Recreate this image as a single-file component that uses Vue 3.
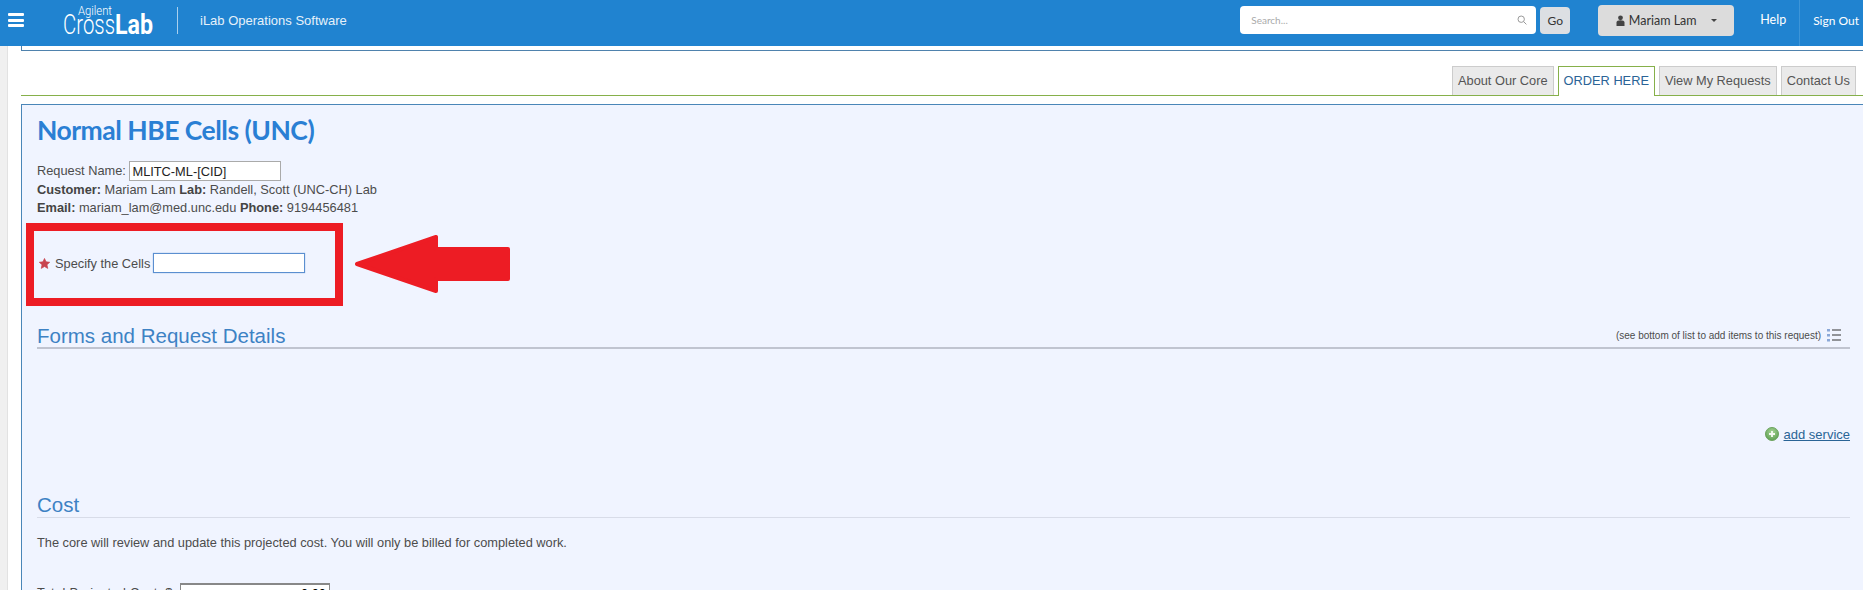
<template>
  <div class="app">
    <header class="topbar">
      <button class="menu-btn" aria-label="Menu">
        <span></span><span></span><span></span>
      </button>
      <svg class="logo" width="96" height="40" viewBox="0 0 96 40">
        <text x="20" y="15" class="logo-small" textLength="34" lengthAdjust="spacingAndGlyphs">Agilent</text>
        <text x="5" y="34" class="logo-light" textLength="52" lengthAdjust="spacingAndGlyphs">Cross</text>
        <text x="57" y="34" class="logo-bold" textLength="38" lengthAdjust="spacingAndGlyphs">Lab</text>
      </svg>
      <div class="brand-divider"></div>
      <div class="brand-name">iLab Operations Software</div>

      <div class="search">
        <span class="search-hint">Search...</span>
        <svg width="10" height="10" viewBox="0 0 10 10" class="search-icon">
          <circle cx="4.2" cy="4.2" r="3.2" fill="none" stroke="#999" stroke-width="1" />
          <path d="M6.6 6.6L9.4 9.4" stroke="#999" stroke-width="1" />
        </svg>
      </div>
      <button class="go-btn">Go</button>
      <button class="user-btn">
        <svg width="9" height="11" viewBox="0 0 9 11">
          <circle cx="4.5" cy="2.8" r="2.4" fill="#444" />
          <path d="M0.5 11V7.5C0.5 6 2 5.3 4.5 5.3S8.5 6 8.5 7.5V11Z" fill="#444" />
        </svg>
        <span>Mariam Lam</span>
        <i class="caret"></i>
      </button>
      <a class="top-link help">Help</a>
      <a class="top-link signout">Sign Out</a>
    </header>

    <div class="page">
      <div class="strip"></div>
      <main class="content">
        <div class="prev-box"></div>

        <nav class="tabs">
          <a v-for="tab in tabs" :key="tab" class="tab" :class="{ active: tab === 'ORDER HERE' }">{{ tab }}</a>
        </nav>

        <section class="panel">
          <h1>Normal HBE Cells (UNC)</h1>

          <div class="info">
            <div class="info-row">Request Name: <input class="name-input" value="MLITC-ML-[CID]" /></div>
            <div><b>Customer:</b> Mariam Lam <b>Lab:</b> Randell, Scott (UNC-CH) Lab</div>
            <div class="info-last"><b>Email:</b> mariam_lam@med.unc.edu <b>Phone:</b> 9194456481</div>
          </div>

          <div class="field">
            <svg width="11" height="11" viewBox="0 0 24 24">
              <path d="M12 1l3.4 7.4 8 .9-6 5.4 1.700 8L12 18.600l-7.100 4.100 1.700-8-6-5.400 8-.9z" fill="#c8434f" stroke="#c8434f" stroke-width="1.500" stroke-linejoin="round" />
            </svg>
            <label>Specify the Cells</label>
            <input class="cells-input" />
          </div>

          <div class="forms-head">
            <h2>Forms and Request Details</h2>
            <div class="forms-hint">
              <span>(see bottom of list to add items to this request)</span>
              <svg width="14" height="13" viewBox="0 0 14 13">
                <rect x="0" y="0" width="3" height="2.500" fill="#8aa8d8" />
                <rect x="0" y="5" width="3" height="2.500" fill="#8aa8d8" />
                <rect x="0" y="10" width="3" height="2.500" fill="#8aa8d8" />
                <path d="M5 1H14M5 6H14M5 11H14" stroke="#333" stroke-width="1" />
              </svg>
            </div>
          </div>

          <div class="add-row">
            <svg width="14" height="14" viewBox="0 0 15 15">
              <defs>
                <radialGradient id="addGreen" cx="50%" cy="35%" r="65%">
                  <stop offset="0%" stop-color="#a6d596" />
                  <stop offset="100%" stop-color="#5f9f52" />
                </radialGradient>
              </defs>
              <circle cx="7.500" cy="7.500" r="7" fill="url(#addGreen)" stroke="#6ba35c" />
              <path d="M7.500 4.300V10.700M4.300 7.500H10.700" stroke="#f4f8f0" stroke-width="2" />
            </svg>
            <a class="add-link">add service</a>
          </div>

          <h2 class="cost-title">Cost</h2>
          <p class="cost-note">The core will review and update this projected cost. You will only be billed for completed work.</p>
          <div class="total-row">
            <span class="total-label">Total Projected Cost: $</span>
            <input class="total-input" value="0.00" />
          </div>
        </section>
      </main>

      <div class="callout"></div>
      <svg class="arrow" width="156" height="60" viewBox="0 0 156 60">
        <path d="M3 30L82 3V15H154V45H82V57Z" fill="#ed1c24" stroke="#ed1c24" stroke-width="4" stroke-linejoin="round" />
      </svg>
    </div>
  </div>
</template>

<script setup>
const tabs = ['About Our Core', 'ORDER HERE', 'View My Requests', 'Contact Us']
</script>

<style>
html, body {
  margin: 0;
  background: #fff;
  overflow: hidden;
}
</style>

<style scoped>
.app {
  height: 590px;
  overflow: hidden;
  font-family: "Liberation Sans", Arial, sans-serif;
  font-size: 12.800px;
  color: #4c4c4c;
}

.topbar {
  height: 46px;
  box-sizing: border-box;
  padding-bottom: 6px;
  background: #2083d0;
  display: flex;
  align-items: center;
  color: #fff;
}

.menu-btn {
  width: 16px;
  margin-left: 8px;
  padding: 0;
  border: none;
  background: none;
  display: flex;
  flex-direction: column;
  gap: 2.500px;
}
.menu-btn span {
  height: 3px;
  background: #fff;
  border-radius: 1px;
}

.logo {
  margin-left: 34px;
  overflow: visible;
}
.logo text {
  fill: #fff;
  font-family: Roboto, sans-serif;
}
.logo-small { font-size: 13px; font-weight: 300; }
.logo-light { font-size: 28px; font-weight: 300; }
.logo-bold { font-size: 28px; font-weight: 700; }

.brand-divider {
  width: 1px;
  height: 27px;
  background: #a9d0ee;
  margin-left: 23px;
}
.brand-name {
  margin-left: 22px;
  font-size: 13px;
  color: #e6f1fa;
}

.search {
  margin-left: auto;
  width: 296px;
  height: 28px;
  box-sizing: border-box;
  background: #fff;
  border-radius: 4px;
  display: flex;
  align-items: center;
  justify-content: space-between;
  padding: 0 9px 0 11px;
}
.search-hint {
  font-family: Lato, sans-serif;
  font-size: 10px;
  color: #aaa;
}

.go-btn {
  width: 30px;
  height: 27px;
  margin-left: 4px;
  padding: 0;
  border: none;
  border-radius: 4px;
  background: #dcdfe3;
  color: #333;
  font-family: Lato, sans-serif;
  font-size: 12px;
}

.user-btn {
  width: 136px;
  height: 31px;
  margin-left: 28px;
  border: none;
  border-radius: 4px;
  background: #dcdcdc;
  color: #333;
  font-family: Lato, sans-serif;
  font-size: 12.500px;
  display: flex;
  align-items: center;
  justify-content: center;
  gap: 4px;
}
.caret {
  margin-left: 10px;
  border-left: 3px solid transparent;
  border-right: 3px solid transparent;
  border-top: 3px solid #444;
}

.top-link {
  font-family: Lato, sans-serif;
  font-size: 12.500px;
  color: #fff;
}
.help {
  align-self: flex-start;
  margin-left: 26px;
  padding-right: 13px;
  height: 46px;
  line-height: 40px;
  border-right: 1px solid #3d95d8;
}
.signout {
  margin-left: 13px;
  margin-right: 4px;
  font-size: 12px;
}

.page {
  position: relative;
  display: flex;
}

.strip {
  width: 7px;
  flex: none;
  background: #f0f0f0;
  border-right: 1px solid #e2e2e2;
}

.content {
  flex: 1;
  min-width: 0;
  margin-left: 13px;
}

.prev-box {
  height: 4px;
  border-left: 1px solid #4f82ad;
  border-bottom: 1px solid #4f82ad;
}

.tabs {
  height: 29px;
  margin-top: 15px;
  padding-right: 7px;
  border-bottom: 1px solid #86b04a;
  display: flex;
  justify-content: flex-end;
  gap: 4px;
}
.tab {
  padding: 0 5px;
  line-height: 28px;
  border: 1px solid #ccc;
  border-bottom: none;
  background: #eaeaea;
  color: #555;
}
.tab.active {
  position: relative;
  height: 29px;
  border-color: #86b04a;
  background: #fff;
  color: #2b6496;
}

.panel {
  margin-top: 8px;
  height: 500px;
  padding: 7px 13px 0 15px;
  border: 1px solid #4a86b8;
  border-right: none;
  background: #f0f4ff;
}

h1 {
  margin: 0;
  font-family: Lato, sans-serif;
  font-size: 26.500px;
  font-weight: 700;
  line-height: 36px;
  letter-spacing: -0.500px;
  color: #2a7fd4;
}

.info {
  margin-top: 13px;
  line-height: 17px;
}
.info-row {
  height: 20px;
  line-height: 20px;
}
.info-last {
  margin-top: 1px;
}
.info b {
  color: #444;
}
.name-input {
  width: 152px;
  height: 20px;
  box-sizing: border-box;
  padding: 0 2px;
  border: 1px solid #aaa;
  background: #fff;
  font: 12.800px "Liberation Sans", Arial, sans-serif;
  color: #222;
  vertical-align: top;
  outline: none;
}

.field {
  margin-top: 37px;
  height: 20px;
  display: flex;
  align-items: center;
  gap: 5px;
}
.field svg {
  margin-left: 2px;
}
.field label {
  margin-right: -2px;
}
.cells-input {
  width: 152px;
  height: 20px;
  box-sizing: border-box;
  border: 1px solid #5b8fd0;
  box-shadow: 0 0 1px #7fa8dc;
  background: #fff;
  outline: none;
}

.forms-head {
  margin-top: 46px;
  height: 28px;
  border-bottom: 2px solid #c0c4d0;
  display: flex;
  justify-content: space-between;
  align-items: flex-end;
}
h2 {
  margin: 0;
  font-size: 20.500px;
  font-weight: 400;
  color: #3d82c4;
}
.forms-head h2 {
  line-height: 22px;
}
.forms-hint {
  font-size: 10px;
  padding-right: 9px;
  padding-bottom: 5px;
  display: flex;
  align-items: center;
  gap: 6px;
}

.add-row {
  margin-top: 77px;
  height: 16px;
  display: flex;
  justify-content: flex-end;
  align-items: center;
  gap: 5px;
}
.add-link {
  font-size: 13px;
  color: #2a6496;
  text-decoration: underline;
}

.cost-title {
  margin-top: 51px;
  line-height: 24px;
  border-bottom: 1px solid #d8dce8;
}
.cost-note {
  margin: 17px 0 0;
  line-height: 16px;
}

.total-row {
  margin-top: 32px;
  display: flex;
  align-items: flex-start;
}
.total-label {
  width: 143px;
  line-height: 20px;
  letter-spacing: 0.300px;
}
.total-input {
  width: 150px;
  height: 20px;
  box-sizing: border-box;
  padding: 0 3px;
  border: 1px solid #888;
  border-top-width: 2px;
  background: #fff;
  font: 12.800px "Liberation Sans", Arial, sans-serif;
  text-align: right;
  outline: none;
}

.callout {
  position: absolute;
  left: 26px;
  top: 177px;
  width: 317px;
  height: 83px;
  box-sizing: border-box;
  border: 8px solid #ed1c24;
}
.arrow {
  position: absolute;
  left: 354px;
  top: 188px;
}
</style>
